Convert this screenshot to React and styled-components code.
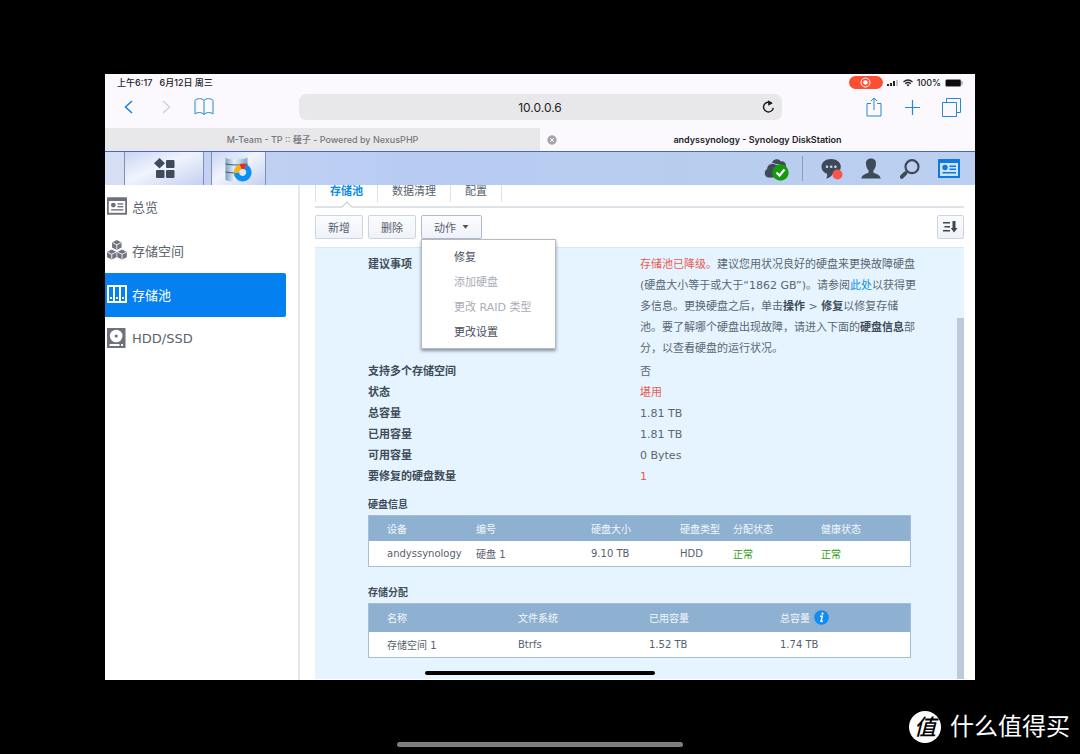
import { useState } from "react";
import styled, { createGlobalStyle, css } from "styled-components";

const GlobalStyle = createGlobalStyle`
  * {
    box-sizing: border-box;
  }

  body {
    margin: 0;
    background: #000;
    color: #57616d;
    font-family: "DejaVu Sans", "Noto Sans CJK SC", sans-serif;
    font-size: 11px;
  }

  button, input {
    font: inherit;
    color: inherit;
  }

  a {
    color: #0f8fe8;
    text-decoration: none;
  }

  svg {
    flex: none;
  }
`;

const Page = styled.div`
  display: flex;
  flex-direction: column;
  min-height: 100vh;
  padding-top: 74px;
`;

const Tablet = styled.div`
  position: relative;
  flex: 1 0 auto;
  display: flex;
  flex-direction: column;
  margin: 0 105px;
  background: #fff;
`;

const HomeBar = styled.div`
  height: ${(props) => props.$size}px;
  border-radius: 3px;
  background: ${(props) => props.$color};
`;

const TabletHomeBar = styled(HomeBar)`
  position: absolute;
  bottom: 5px;
  left: 50%;
  width: 230px;
  margin-left: -115px;
`;

/* Safari */

const Browser = styled.header`
  background: #fbf9fd;
  color: #222226;
  font-family: Inter, "Noto Sans CJK SC", sans-serif;
`;

const StatusBar = styled.div`
  display: flex;
  align-items: center;
  gap: 4px;
  height: 17px;
  padding: 0 12px;
  font-size: 9px;
  font-weight: 500;
`;

const StatusTime = styled.span`
  margin-right: auto;
  white-space: pre;
`;

const RecordPill = styled.span`
  display: flex;
  align-items: center;
  justify-content: center;
  width: 34px;
  height: 13px;
  border-radius: 7px;
  background: #fb4f33;
`;

const BrowserBar = styled.div`
  display: grid;
  grid-template-columns: 1fr 483px 1fr;
  align-items: center;
  padding: 3px 0 8px;
`;

const BarIcons = styled.div`
  display: flex;
  justify-content: ${(props) => (props.$end ? "flex-end" : "flex-start")};
  padding: 0 4px;
`;

const IconButton = styled.button`
  display: flex;
  align-items: center;
  justify-content: center;
  width: ${(props) => props.$width || 39}px;
  height: 26px;
  padding: 0;
  border: 0;
  background: none;
`;

const Address = styled.div`
  display: flex;
  align-items: center;
  height: 26px;
  padding: 0 2px 0 24px;
  border-radius: 7px;
  background: #e8e8ea;
`;

const AddressInput = styled.input`
  flex: 1;
  min-width: 0;
  padding: 0;
  border: 0;
  outline: 0;
  background: none;
  text-align: center;
  font-size: 12px;
`;

const BrowserTabs = styled.div`
  display: grid;
  grid-template-columns: 1fr 1fr;
`;

const BrowserTab = styled.div`
  display: flex;
  align-items: center;
  height: 23px;
  font-size: 9px;
  font-weight: ${(props) => (props.$active ? 600 : 500)};
  background: ${(props) => (props.$active ? "#fbf9fd" : "#e8e7ea")};
  color: ${(props) => (props.$active ? "#222226" : "#77777c")};
`;

const BrowserTabTitle = styled.span`
  flex: 1;
  padding-right: ${(props) => (props.$closable ? 24 : 0)}px;
  text-align: center;
`;

/* DiskStation taskbar */

const Taskbar = styled.div`
  display: flex;
  align-items: stretch;
  height: 34px;
  border-top: 1px solid #4a66bd;
  background: linear-gradient(to right, #c8d4f2, #b8ccf3 35%, #b8ceee 70%, #bccff0);
`;

const TaskbarEdge = styled.div`
  width: 19px;
  background: #d6def4;
`;

const TaskButton = styled.button`
  display: flex;
  align-items: center;
  justify-content: center;
  width: ${(props) => props.$width}px;
  margin-right: 7px;
  padding: 0;
  border: 0;
  border-left: 1px solid #7f8fb8;
  border-right: 1px solid #7f8fb8;
  background: linear-gradient(to bottom right, #c9d5f1, #f1f4fd 45%, #c3d0f0);
`;

const Tray = styled.div`
  display: flex;
  align-items: center;
  margin-left: auto;
  padding-right: 7px;
  color: #3f4a58;
`;

const TraySeparator = styled.span`
  width: 1px;
  height: 25px;
  margin: 0 9px 0 13px;
  background: #8b9cba;
`;

/* Storage manager */

const Main = styled.main`
  flex: 1;
  display: flex;
`;

const Sidebar = styled.nav`
  flex: none;
  width: 195px;
  border-right: 2px solid #e7e7ee;
`;

const SidebarLink = styled.a`
  display: flex;
  align-items: center;
  gap: 5px;
  width: 181px;
  height: 44px;
  padding: 0 0 2px 2px;
  border-radius: 0 2px 2px 0;
  color: #5b636e;
  font-size: 13px;

  ${(props) =>
    props.$active &&
    css`
      background: #0580f0;
      color: #fff;
    `}
`;

const Content = styled.section`
  flex: 1;
  min-width: 0;
  display: flex;
  flex-direction: column;
  padding: 0 11px 1px 15px;
`;

const Tabs = styled.div`
  display: flex;
  height: 23px;
  border-bottom: 2px solid #dfe2e8;
`;

const Tab = styled.button`
  position: relative;
  height: 17px;
  padding: 0 14px 3px;
  border: 0;
  border-right: 1px solid #dcdfe6;
  background: none;
  line-height: 14px;
  white-space: nowrap;

  &:first-child {
    border-left: 1px solid #dcdfe6;
  }

  ${(props) =>
    props.$active &&
    css`
      color: #0a8be2;
      font-weight: 700;

      &::after {
        content: "";
        position: absolute;
        left: 50%;
        top: 18px;
        width: 7px;
        height: 7px;
        margin-left: -4px;
        border: 1px solid #c3c9d2;
        border-width: 1px 0 0 1px;
        background: #fff;
        transform: rotate(45deg);
      }
    `}
`;

const Actions = styled.div`
  display: flex;
  gap: 5px;
  padding: 7px 0 8px;
`;

const Button = styled.button`
  display: flex;
  align-items: center;
  justify-content: center;
  gap: 6px;
  height: 24px;
  padding: 0 12px;
  border: 1px solid ${(props) => (props.$open ? "#b3bccb" : "#cfd5df")};
  border-radius: 2px;
  background: linear-gradient(to bottom, #fbfcfe, #eff2f9);
  white-space: nowrap;
`;

const SortButton = styled(Button)`
  margin-left: auto;
  width: 27px;
  padding: 0;
`;

const Dropdown = styled.div`
  position: relative;
`;

const Menu = styled.div`
  position: absolute;
  z-index: 1;
  top: 24px;
  left: 0;
  width: 135px;
  padding: 4px 0;
  border: 1px solid #b4bac6;
  background: #fff;
  box-shadow: 0 2px 3px rgba(60, 70, 90, 0.55);
`;

const MenuItem = styled.button`
  display: block;
  width: 100%;
  height: 25px;
  padding: 0 0 2px 32px;
  border: 0;
  background: none;
  color: #484f59;
  text-align: left;
  white-space: nowrap;

  &:disabled {
    color: #a9adb7;
  }
`;

const Panel = styled.div`
  flex: 1;
  display: flex;
  border-top: 1px solid #dbe6ef;
  background: #e5f4fe;
`;

const PanelBody = styled.div`
  flex: 1;
  min-width: 0;
  padding: 6px 46px 20px 53px;
`;

const ScrollThumb = styled.div`
  width: 7px;
  margin-top: 70px;
  background: #bdcadc;
`;

const Details = styled.dl`
  display: grid;
  grid-template-columns: 272px 1fr;
  margin: 0 0 7px;
  line-height: 21px;

  dt {
    color: #3f4c5a;
    font-weight: 700;
  }

  dd {
    margin: 0;
    white-space: nowrap;
  }
`;

const Value = styled.dd`
  color: ${(props) => (props.$alert ? "#ea5a55" : "#5b6773")};
`;

const Advice = styled(Value)`
  padding-bottom: 2px;

  strong {
    color: #3f4c5a;
  }
`;

const Alert = styled.span`
  color: #ea5a55;
`;

const Block = styled.section`
  & + & {
    margin-top: 15px;
  }
`;

const BlockTitle = styled.h2`
  margin: 0;
  color: #3f4c5a;
  font-size: 10px;
  line-height: 21px;
`;

const Table = styled.table`
  width: 100%;
  border-spacing: 0;
  border: 1px solid #a5bdd8;
  background: #fff;
  table-layout: fixed;
  font-size: 10px;
  text-align: left;

  th,
  td {
    height: 25px;
    padding: 0 0 1px;
    white-space: nowrap;
  }

  th {
    height: ${(props) => props.$head}px;
    background: #8fb1d1;
    color: #f2f7fb;
    font-weight: 400;
  }

  th:first-child,
  td:first-child {
    padding-left: 18px;
  }
`;

const HeadLabel = styled.span`
  display: inline-flex;
  align-items: center;
  gap: 4px;
`;

const Ok = styled.span`
  color: #2da012;
`;

/* Outside of the tablet */

const Footer = styled.footer`
  display: grid;
  grid-template-columns: 1fr 286px 1fr;
  align-items: end;
  height: 74px;
`;

const ScreenHomeBar = styled(HomeBar)`
  grid-column: 2;
  margin-bottom: 7px;
`;

const Brand = styled.div`
  display: flex;
  justify-content: flex-end;
  gap: 9px;
  height: 32px;
  margin: 0 10px 11px 0;
  color: #fff;
  font-family: "Noto Sans CJK SC", sans-serif;
  font-size: 24px;
  line-height: 28px;
`;

const BrandMark = styled.span`
  display: flex;
  justify-content: center;
  width: 32px;
  height: 32px;
  border-radius: 50%;
  background: #fff;
  color: #000;
  font-size: 22px;
  font-style: italic;
  font-weight: 500;
`;

const SafariIcon = ({ width, height, color = "#2488d2", children }) => (
  <svg width={width} height={height} viewBox={`0 0 ${width} ${height}`} fill="none" stroke={color} aria-hidden="true">
    {children}
  </svg>
);

const SignalIcon = () => (
  <svg width="12" height="8" viewBox="0 0 12 8" fill="#222226" aria-hidden="true">
    <rect x="0" y="5" width="2" height="2" />
    <rect x="3" y="4" width="2" height="3" />
    <rect x="6" y="2" width="2" height="5" />
    <rect x="9" y="1" width="2" height="6" fill="#c3c3c8" />
  </svg>
);

const WifiIcon = () => (
  <svg width="10" height="8" viewBox="0 0 20 16" fill="none" stroke="#222226" strokeWidth="2.6" aria-hidden="true">
    <path d="M1 6 Q10 -2 19 6 M4.5 9.5 Q10 4.5 15.5 9.5" />
    <path d="M7 11.5 Q10 9 13 11.5 L10 15Z" fill="#222226" stroke="none" />
  </svg>
);

const BatteryIcon = () => (
  <svg width="18" height="8" viewBox="0 0 18 8" aria-hidden="true">
    <rect x="0.5" y="0.5" width="15.5" height="7" rx="1.5" fill="#0c0c0e" stroke="#8f8f94" strokeWidth="0.7" />
    <rect x="16.6" y="2.5" width="1" height="3" fill="#8f8f94" />
  </svg>
);

const AppsIcon = () => (
  <svg width="21" height="21" viewBox="0 0 21 21" fill="#3f4a5a" aria-hidden="true">
    <path d="M5.5 0 L11 5.3 L5.5 10.6 L0 5.3Z" />
    <rect x="12" y="2" width="8.5" height="8" rx="1" />
    <rect x="2" y="12" width="8.5" height="8" rx="1" />
    <rect x="12" y="12" width="8.5" height="8" rx="1" />
  </svg>
);

const StorageIcon = () => (
  <svg width="28" height="28" viewBox="0 0 28 28" fill="none" aria-hidden="true">
    <defs>
      <linearGradient id="disk" x1="0" x2="1" y1="0" y2="0">
        <stop offset="0" stopColor="#7fa0be" />
        <stop offset="0.4" stopColor="#e9f2f9" />
        <stop offset="1" stopColor="#84a5c2" />
      </linearGradient>
    </defs>
    <path d="M0.5 2.5 V24.5 Q1 26.5 11.5 26.5 T22.500 24.5 V2.5Z" fill="url(#disk)" />
    <ellipse cx="11.5" cy="2.5" rx="11" ry="1.8" fill="#dbe9f4" />
    <path d="M0.5 9 Q11.5 11 22.5 9 M0.5 17 Q11.5 19 22.5 17" stroke="#3f5c78" strokeWidth="1.2" />
    <circle cx="17.700" cy="17.5" r="4" fill="#dfe9f6" />
    <g strokeWidth="5.4">
      <path d="M20.4 11.9 A6.2 6.2 0 1 1 11.5 17.5" stroke="#0a8ff2" />
      <path d="M11.5 18 A6.2 6.2 0 0 1 15.6 11.7" stroke="#f6b21d" />
      <path d="M15.6 11.7 A6.2 6.2 0 0 1 20.4 11.9" stroke="#e5311f" />
    </g>
  </svg>
);

const CloudIcon = () => (
  <svg width="26" height="24" viewBox="0 0 26 24" aria-hidden="true">
    <path d="M9 6 A5 5 0 0 1 18 4.5 A4 4 0 0 1 22 11 H9Z" fill="#3f4a58" />
    <path
      d="M5 21 A5 5 0 0 1 3.5 12 A6 6 0 0 1 13 7.5 A6 6 0 0 1 20 12 V21Z"
      fill="#3f4a58"
      stroke="#b9cdef"
      strokeWidth="0.9"
    />
    <circle cx="17.5" cy="15.5" r="8.2" fill="#159a0d" />
    <path d="M13.5 15.5 L16.5 18.5 L21.5 12.5" fill="none" stroke="#fff" strokeWidth="2.2" />
  </svg>
);

const ChatIcon = () => (
  <svg width="22" height="22" viewBox="0 0 22 22" aria-hidden="true">
    <path
      d="M10 1 C4.5 1 0.5 4.3 0.5 8.7 C0.5 12.3 3 14.6 6 15.7 C6.5 17.5 6 19 5 20.5 C8.5 20 10.5 18.5 11.5 16.3 C16.5 16 19.8 13 19.8 8.7 C19.8 4.3 15.5 1 10 1Z"
      fill="#3f4a58"
    />
    <g fill="#c9d8f2">
      <circle cx="6" cy="8.7" r="1.3" />
      <circle cx="10.2" cy="8.7" r="1.3" />
      <circle cx="14.4" cy="8.7" r="1.3" />
    </g>
    <circle cx="16.5" cy="16.5" r="5" fill="#f8554d" />
  </svg>
);

const UserIcon = () => (
  <svg width="20" height="21" viewBox="0 0 20 21" fill="#3f4a58" aria-hidden="true">
    <path d="M10 0.5 C6.3 0.5 4.8 2.8 5 6 C5.2 9 6.2 11 7.6 12.3 V14.5 C6.5 15.8 1 16 0.3 20.5 H19.7 C19 16 13.5 15.8 12.4 14.5 V12.3 C13.8 11 14.8 9 15 6 C15.2 2.8 13.7 0.5 10 0.5Z" />
  </svg>
);

const SearchIcon = () => (
  <svg width="20" height="20" viewBox="0 0 20 20" fill="none" stroke="#3f4a58" aria-hidden="true">
    <circle cx="12" cy="7.7" r="6.5" strokeWidth="2.2" />
    <path d="M7 12.5 L5 14.5" strokeWidth="2" />
    <path d="M5.3 14.3 L1.8 17.8" strokeWidth="4" strokeLinecap="round" />
  </svg>
);

const CardIcon = ({ width = 22, height = 19, color, paper }) => (
  <svg width={width} height={height} viewBox="0 0 22 19" fill={color} aria-hidden="true">
    <rect width="22" height="19" rx="0.5" />
    <rect x="2" y="4" width="18" height="13" fill={paper} />
    <circle cx="7" cy="8.5" r="2.7" />
    <rect x="11.5" y="6.5" width="6.5" height="1.5" />
    <rect x="11.5" y="9.5" width="6.5" height="1.5" />
    <rect x="4.5" y="13" width="13.5" height="1.5" />
  </svg>
);

const Cube = ({ x, y }) => (
  <g transform={`translate(${x} ${y})`}>
    <path d="M5 0 L10 2.5 V8 L5 10.5 L0 8 V2.5Z" fill="#70747f" />
    <path d="M0.5 2.8 L5 5 L9.5 2.8 M5 5 V10" stroke="#fff" strokeWidth="0.9" fill="none" />
  </g>
);

const VolumeIcon = () => (
  <svg width="20" height="20" viewBox="0 0 21 21" aria-hidden="true">
    <Cube x={5.3} y={0} />
    <Cube x={0} y={10} />
    <Cube x={10.8} y={10} />
  </svg>
);

const PoolIcon = () => (
  <svg width="20" height="18" viewBox="0 0 20 18" aria-hidden="true">
    <rect width="20" height="18" fill="#fff" />
    {[2, 8, 14].map((x) => (
      <g key={x}>
        <rect x={x} y="2" width="4" height="14" fill="#0580f0" />
        <rect x={x + 1} y="12" width="2" height="2" fill="#fff" />
      </g>
    ))}
  </svg>
);

const DriveIcon = () => (
  <svg width="20" height="20" viewBox="0 0 20 20" aria-hidden="true">
    <rect width="18.5" height="20" fill="#6d717c" />
    <circle cx="9.2" cy="8" r="6.3" fill="#fff" />
    <circle cx="9.2" cy="8" r="1.6" fill="#6d717c" />
    <rect x="2.5" y="16" width="13.5" height="2" fill="#fff" />
    <rect x="12.5" y="16" width="1.5" height="2" fill="#6d717c" />
  </svg>
);

const SortIcon = () => (
  <svg width="15" height="12" viewBox="0 0 15 12" fill="#3d4650" aria-hidden="true">
    <path d="M0 1 H7 V2.5 H0Z M1.5 5 H7 V6.5 H1.5Z M0 9 H7 V10.5 H0Z" />
    <path d="M9.5 0 H12.5 V7 H14.5 L11 11.5 L7.8 7 H9.5Z" />
  </svg>
);

const CaretIcon = () => (
  <svg width="7" height="4" viewBox="0 0 7 4" fill="#4a525d" aria-hidden="true">
    <path d="M0.5 0 H6.5 L3.5 3.7Z" />
  </svg>
);

const InfoIcon = () => (
  <svg width="15" height="15" viewBox="0 0 15 15" aria-hidden="true">
    <circle cx="7.5" cy="7.5" r="7.3" fill="#0f8cf5" />
    <circle cx="8.5" cy="3.7" r="1.1" fill="#fff" />
    <path d="M6 6.3 H8.3 L7 11.3 H8.8" fill="none" stroke="#fff" strokeWidth="1.4" />
  </svg>
);

const sections = [
  { label: "总览", icon: <CardIcon width={20} height={18} color="#6d717c" paper="#fff" /> },
  { label: "存储空间", icon: <VolumeIcon /> },
  { label: "存储池", icon: <PoolIcon />, active: true },
  { label: "HDD/SSD", icon: <DriveIcon /> },
];

const menuItems = [
  { label: "修复" },
  { label: "添加硬盘", disabled: true },
  { label: "更改 RAID 类型", disabled: true },
  { label: "更改设置" },
];

const details = [
  { label: "支持多个存储空间", value: "否" },
  { label: "状态", value: "堪用", alert: true },
  { label: "总容量", value: "1.81 TB" },
  { label: "已用容量", value: "1.81 TB" },
  { label: "可用容量", value: "0 Bytes" },
  { label: "要修复的硬盘数量", value: "1", alert: true },
];

const BrowserChrome = () => (
  <Browser>
    <StatusBar>
      <StatusTime>上午6:17{"   "}6月12日 周三</StatusTime>
      <RecordPill>
        <svg width="11" height="11" viewBox="0 0 11 11" aria-hidden="true">
          <circle cx="5.5" cy="5.5" r="4.5" fill="none" stroke="#fff" />
          <circle cx="5.5" cy="5.5" r="2.3" fill="#fff" />
        </svg>
      </RecordPill>
      <SignalIcon />
      <WifiIcon />
      <span>100%</span>
      <BatteryIcon />
    </StatusBar>
    <BrowserBar>
      <BarIcons>
        <IconButton aria-label="后退" $width={38}>
          <SafariIcon width={9} height={14} color="#1580dc">
            <path d="M8 1 L1.5 7 L8 13" strokeWidth="1.5" />
          </SafariIcon>
        </IconButton>
        <IconButton aria-label="前进" $width={38}>
          <SafariIcon width={9} height={14} color="#cfcfd6">
            <path d="M1 1 L7.5 7 L1 13" strokeWidth="1.3" />
          </SafariIcon>
        </IconButton>
        <IconButton aria-label="书签" $width={38}>
          <SafariIcon width={20} height={18}>
            <path d="M10 2.5 C8 0 3 0 1 2.5 V16 C3 14 8 14 10 16.5 C12 14 17 14 19 16 V2.5 C17 0 12 0 10 2.5Z M10 2.5 V16.5" />
          </SafariIcon>
        </IconButton>
      </BarIcons>
      <Address>
        <AddressInput aria-label="地址" defaultValue="10.0.0.6" />
        <IconButton aria-label="重新加载" $width={22}>
          <SafariIcon width={13} height={14} color="#19191c">
            <path d="M9.5 3.2 A4.9 4.9 0 1 0 11.3 7.8" strokeWidth="1.4" />
            <path d="M6 0.3 L10.8 3.2 L6.3 5.7Z" fill="#19191c" stroke="none" />
          </SafariIcon>
        </IconButton>
      </Address>
      <BarIcons $end>
        <IconButton aria-label="共享">
          <SafariIcon width={16} height={20}>
            <path d="M5 6.5 H1 V19 H15 V6.5 H11 M8 13 V1 M4.8 4.2 L8 1 L11.2 4.2" />
          </SafariIcon>
        </IconButton>
        <IconButton aria-label="新标签页">
          <SafariIcon width={15} height={15}>
            <path d="M7.5 0 V15 M0 7.5 H15" strokeWidth="1.2" />
          </SafariIcon>
        </IconButton>
        <IconButton aria-label="所有标签页">
          <SafariIcon width={19} height={19}>
            <path d="M0.5 4.5 H14.5 V18.5 H0.5Z M4.5 4.5 V0.5 H18.5 V14.5 H14.5" />
          </SafariIcon>
        </IconButton>
      </BarIcons>
    </BrowserBar>
    <BrowserTabs>
      <BrowserTab>
        <BrowserTabTitle>M-Team - TP :: 種子 - Powered by NexusPHP</BrowserTabTitle>
      </BrowserTab>
      <BrowserTab $active>
        <IconButton aria-label="关闭标签页" $width={24}>
          <svg width="10" height="10" viewBox="0 0 10 10" aria-hidden="true">
            <circle cx="5" cy="5" r="4.7" fill="#a5a4a8" />
            <path d="M3 3 L7 7 M7 3 L3 7" stroke="#fff" />
          </svg>
        </IconButton>
        <BrowserTabTitle $closable>andyssynology - Synology DiskStation</BrowserTabTitle>
      </BrowserTab>
    </BrowserTabs>
  </Browser>
);

const DesktopTaskbar = () => (
  <Taskbar>
    <TaskbarEdge />
    <TaskButton $width={80} aria-label="主菜单">
      <AppsIcon />
    </TaskButton>
    <TaskButton $width={55} aria-label="存储空间管理员">
      <StorageIcon />
    </TaskButton>
    <Tray>
      <IconButton $width={26} aria-label="云同步">
        <CloudIcon />
      </IconButton>
      <TraySeparator />
      <IconButton aria-label="通知">
        <ChatIcon />
      </IconButton>
      <IconButton aria-label="用户">
        <UserIcon />
      </IconButton>
      <IconButton aria-label="搜索">
        <SearchIcon />
      </IconButton>
      <IconButton aria-label="小工具">
        <CardIcon color="#0b7be0" paper="#cfe2f8" />
      </IconButton>
    </Tray>
  </Taskbar>
);

const ActionMenu = () => {
  const [open, setOpen] = useState(true);

  return (
    <Dropdown>
      <Button $open={open} aria-expanded={open} onClick={() => setOpen(!open)}>
        动作
        <CaretIcon />
      </Button>
      {open && (
        <Menu role="menu">
          {menuItems.map((item) => (
            <MenuItem key={item.label} role="menuitem" disabled={item.disabled}>
              {item.label}
            </MenuItem>
          ))}
        </Menu>
      )}
    </Dropdown>
  );
};

const DiskTable = () => (
  <Block>
    <BlockTitle>硬盘信息</BlockTitle>
    <Table $head={25}>
      <colgroup>
        <col width="107" />
        <col width="115" />
        <col width="89" />
        <col width="53" />
        <col width="88" />
        <col />
      </colgroup>
      <thead>
        <tr>
          <th>设备</th>
          <th>编号</th>
          <th>硬盘大小</th>
          <th>硬盘类型</th>
          <th>分配状态</th>
          <th>健康状态</th>
        </tr>
      </thead>
      <tbody>
        <tr>
          <td>andyssynology</td>
          <td>硬盘 1</td>
          <td>9.10 TB</td>
          <td>HDD</td>
          <td>
            <Ok>正常</Ok>
          </td>
          <td>
            <Ok>正常</Ok>
          </td>
        </tr>
      </tbody>
    </Table>
  </Block>
);

const VolumeTable = () => (
  <Block>
    <BlockTitle>存储分配</BlockTitle>
    <Table $head={28}>
      <colgroup>
        <col width="149" />
        <col width="131" />
        <col width="131" />
        <col />
      </colgroup>
      <thead>
        <tr>
          <th>名称</th>
          <th>文件系统</th>
          <th>已用容量</th>
          <th>
            <HeadLabel>
              总容量
              <InfoIcon />
            </HeadLabel>
          </th>
        </tr>
      </thead>
      <tbody>
        <tr>
          <td>存储空间 1</td>
          <td>Btrfs</td>
          <td>1.52 TB</td>
          <td>1.74 TB</td>
        </tr>
      </tbody>
    </Table>
  </Block>
);

const App = () => (
  <Page>
    <GlobalStyle />
    <Tablet>
      <BrowserChrome />
      <DesktopTaskbar />
      <Main>
        <Sidebar>
          {sections.map((section) => (
            <SidebarLink key={section.label} href="#" $active={section.active}>
              {section.icon}
              {section.label}
            </SidebarLink>
          ))}
        </Sidebar>
        <Content>
          <Tabs>
            <Tab $active>存储池</Tab>
            <Tab>数据清理</Tab>
            <Tab>配置</Tab>
          </Tabs>
          <Actions>
            <Button>新增</Button>
            <Button>删除</Button>
            <ActionMenu />
            <SortButton aria-label="排序">
              <SortIcon />
            </SortButton>
          </Actions>
          <Panel>
            <PanelBody>
              <Details>
                <dt>建议事项</dt>
                <Advice>
                  <Alert>存储池已降级。</Alert>建议您用状况良好的硬盘来更换故障硬盘
                  <br />
                  (硬盘大小等于或大于“1862 GB”)。请参阅<a href="#">此处</a>以获得更
                  <br />
                  多信息。更换硬盘之后，单击<strong>操作</strong> &gt; <strong>修复</strong>以修复存储
                  <br />
                  池。要了解哪个硬盘出现故障，请进入下面的<strong>硬盘信息</strong>部
                  <br />
                  分，以查看硬盘的运行状况。
                </Advice>
                {details.map((item) => [
                  <dt key={item.label}>{item.label}</dt>,
                  <Value key={`${item.label}-value`} $alert={item.alert}>
                    {item.value}
                  </Value>,
                ])}
              </Details>
              <DiskTable />
              <VolumeTable />
            </PanelBody>
            <ScrollThumb />
          </Panel>
        </Content>
      </Main>
      <TabletHomeBar $size={4} $color="#000" />
    </Tablet>
    <Footer>
      <ScreenHomeBar $size={5} $color="#7d7d7d" />
      <Brand>
        <BrandMark>值</BrandMark>
        什么值得买
      </Brand>
    </Footer>
  </Page>
);

export default App;
